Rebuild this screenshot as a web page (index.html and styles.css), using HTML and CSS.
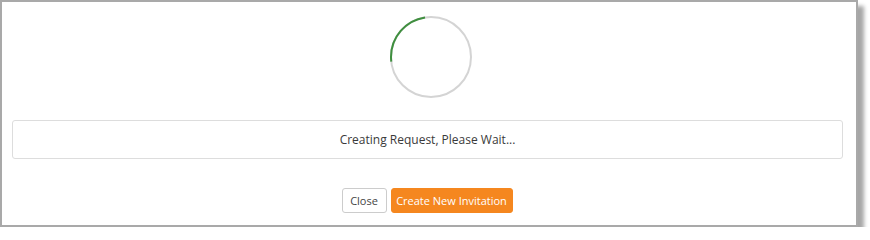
FILE: index.html
```html
<!DOCTYPE html>
<html>
<head>
<meta charset="utf-8">
<link rel="stylesheet" href="styles.css">
</head>
<body>
<div class="dialog">
  <div class="spinner">
    <svg width="84" height="84" viewBox="0 0 84 84">
      <circle cx="42" cy="42" r="40" fill="none" stroke="#d4d4d4" stroke-width="2"/>
      <circle cx="42" cy="42" r="40" fill="none" stroke="#3f8f3f" stroke-width="2" stroke-dasharray="61.4 300" stroke-dashoffset="-120.8"/>
    </svg>
  </div>
  <div class="status">Creating Request, Please Wait...</div>
  <div class="actions">
    <button class="btn btn-close">Close</button>
    <button class="btn btn-primary">Create New Invitation</button>
  </div>
</div>
</body>
</html>
```
FILE: styles.css
```css
html, body {
  margin: 0;
  padding: 0;
  background: #ffffff;
}
body {
  font-family: "Open Sans", "Liberation Sans", sans-serif;
  color: #333333;
}
.dialog {
  width: 854px;
  height: 223px;
  border: 2px solid #a9a9a9;
  background: #ffffff;
  box-shadow: 6px 6px 4px rgba(0, 0, 0, 0.35);
  display: flex;
  flex-direction: column;
  align-items: center;
}
.spinner {
  margin-top: 13px;
  margin-left: 4px;
  height: 84px;
}
.spinner svg {
  display: block;
}
.status {
  margin-top: 21px;
  width: 829px;
  height: 37px;
  border: 1px solid #dddddd;
  border-radius: 3px;
  display: flex;
  align-items: center;
  justify-content: center;
  font-size: 12px;
  color: #3a3a3a;
  margin-left: -3px;
}
.actions {
  margin-top: 29px;
  margin-left: -4px;
  display: flex;
  gap: 4px;
}
.btn {
  height: 25px;
  font-family: "Open Sans", "Liberation Sans", sans-serif;
  font-size: 11px;
  border-radius: 3px;
  padding: 0;
  cursor: pointer;
}
.btn-close {
  background: #ffffff;
  border: 1px solid #cccccc;
  color: #444444;
  width: 45px;
}
.btn-primary {
  background: #f5871f;
  border: 1px solid #f5871f;
  color: #ffffff;
  width: 122px;
}
```
